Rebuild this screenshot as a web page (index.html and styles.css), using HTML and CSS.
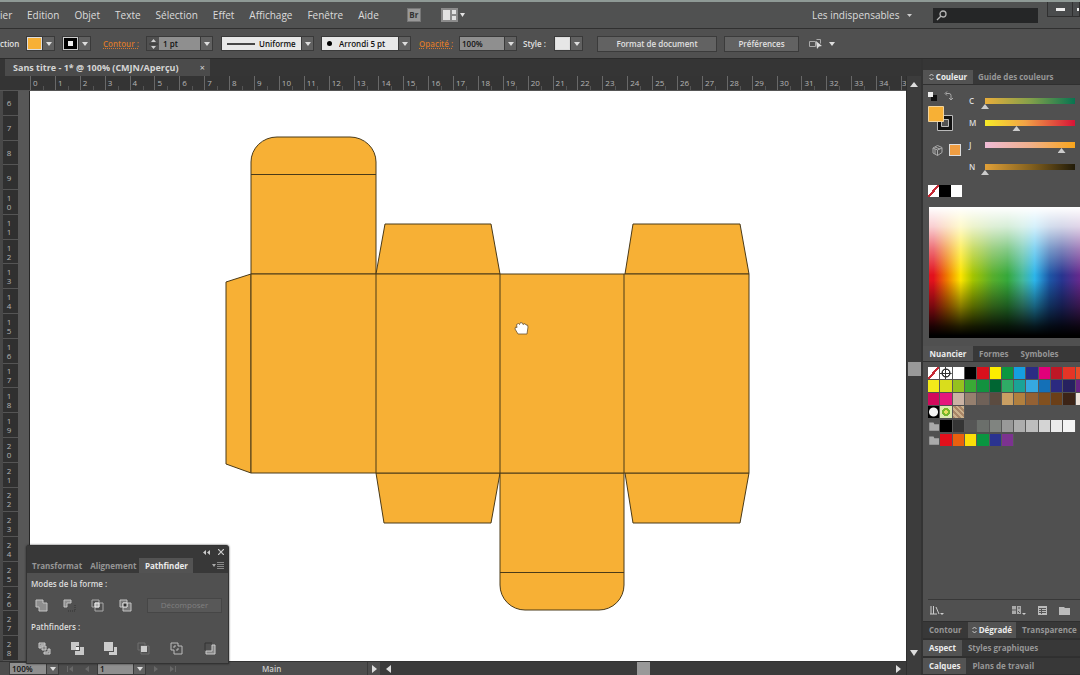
FILE: index.html
```html
<!DOCTYPE html>
<html lang="fr">
<head>
<meta charset="utf-8">
<title>Sans titre - 1</title>
<link rel="stylesheet" href="styles.css">
</head>
<body>
<div class="app">
  <header class="menubar">
    <nav class="menus">
      <a class="menu-cut" href="#">ier</a><a href="#">Edition</a><a href="#">Objet</a><a href="#">Texte</a><a href="#">Sélection</a><a href="#">Effet</a><a href="#">Affichage</a><a href="#">Fenêtre</a><a href="#">Aide</a>
    </nav>
    <button class="bridge" aria-label="Bridge"><span>Br</span></button>
    <button class="arrange" aria-label="Disposition">
      <svg width="24" height="14" viewBox="0 0 24 14"><path fill="#8b8b8b" d="M0 0h17v14H0z"/><path fill="#e2e2e2" d="M2 2h7v10H2zM11 2h4v4h-4zM11 8h4v4h-4zM19 5h5l-2.500 4z"/></svg>
    </button>
    <div class="workspace-pick">
      <select aria-label="Espace de travail"><option>Les indispensables</option></select>
      <svg width="5" height="3" viewBox="0 0 5 3"><path fill="#ccc" d="M0 0h5L2.500 3z"/></svg>
    </div>
    <label class="search">
      <svg width="11" height="11" viewBox="0 0 11 11" fill="none" stroke="#b5b5b5" stroke-width="1.300"><circle cx="7" cy="4" r="3"/><path d="M5 6L1 10"/></svg>
      <input type="text" aria-label="Rechercher">
    </label>
    <div class="window-buttons"><button aria-label="Réduire"><i></i></button><button aria-label="Agrandir"><i></i></button></div>
  </header>

  <div class="control">
    <span class="selection">ction</span>
    <div class="combo fill-combo"><button class="chip fill" aria-label="Fond"></button><button class="arrow" aria-label="Choisir le fond"></button></div>
    <div class="combo stroke-combo"><button class="chip stroke" aria-label="Couleur de contour"><i></i></button><button class="arrow" aria-label="Choisir le contour"></button></div>
    <a class="hot contour" href="#">Contour :</a>
    <div class="combo weight">
      <button class="stepper" aria-label="Epaisseur"><svg width="9" height="14" viewBox="0 0 9 14"><path fill="#d0d0d0" d="M2 5h5L4.500 2zM2 9h5l-2.500 3z"/><path stroke="#353535" d="M0 7h9"/></svg></button>
      <input type="text" value="1 pt" aria-label="Epaisseur du contour"><button class="arrow" aria-label="Liste des épaisseurs"></button>
    </div>
    <div class="combo light profile"><svg width="28" height="4" viewBox="0 0 28 4"><path stroke="#111" stroke-width="1.500" d="M0 2h28"/></svg><select aria-label="Profil"><option>Uniforme</option></select><button class="arrow" aria-label="Liste des profils"></button></div>
    <div class="combo light brush"><svg width="5" height="5" viewBox="0 0 5 5"><circle cx="2.500" cy="2.500" r="2.500"/></svg><select aria-label="Forme"><option>Arrondi 5 pt</option></select><button class="arrow" aria-label="Liste des formes"></button></div>
    <a class="hot opacity" href="#">Opacité :</a>
    <div class="combo percent"><input type="text" value="100%" aria-label="Opacité"><button class="arrow" aria-label="Liste des opacités"></button></div>
    <span class="style-label">Style :</span>
    <div class="combo"><button class="chip style" aria-label="Style graphique"></button><button class="arrow" aria-label="Liste des styles"></button></div>
    <button class="push format">Format de document</button>
    <button class="push prefs">Préférences</button>
    <button class="similar" aria-label="Sélectionner les objets similaires">
      <svg width="26" height="12" viewBox="0 0 26 12"><path fill="none" stroke="#aaa" d="M.5 3.500h6v5h-6zM7.500 1.500h4v4"/><path fill="#ddd" d="M7 3l6 5-3 .5L8 11zM20 4h6l-3 4z"/></svg>
    </button>
  </div>

  <main class="workspace">
    <section class="document">
      <div class="tabs-row"><div class="doc-tab"><span>Sans titre - 1* @ 100% (CMJN/Aperçu)</span><button aria-label="Fermer">×</button></div></div>
      <div class="ruler-h" id="ruler-h"></div>
      <div class="ruler-v" id="ruler-v"></div>
      <div class="artboard">
        <svg viewBox="30 91 876 570" preserveAspectRatio="xMinYMin slice">
          <g fill="#f7b035" stroke="#4a3a18" stroke-width="1">
            <path d="M251 274V162a26 25 0 0 1 26-25H350a26 25 0 0 1 26 25V274z"/>
            <path d="M251 274l-25 8v182l25 9z"/>
            <path d="M376 274l9-50H491l9 50zM625 274l8-50H740l9 50z"/>
            <path d="M376 473l8 50H491l9-50zM625 473l8 50H740l9-50z"/>
            <path d="M500 473V585a25 25 0 0 0 25 25H599a25 25 0 0 0 25-25V473z"/>
            <path d="M251 274H749V473H251zM376 274V473M500 274V473M624 274V473"/>
            <path fill="none" d="M251 174.500H376M500 572.500H624"/>
          </g>
          <path fill="#fff" stroke="#6b5330" stroke-width=".8" d="M518 334l-3-5 .5-2 1.500.5-.5-3 2-1 1 1 1-2 2 .5.500 1.500 2-1 1 1.500 1.500 0 .5 2-1 7z"/>
        </svg>
      </div>
      <div class="scroll-v"><button aria-label="Monter"><svg width="8" height="6" viewBox="0 0 8 6"><path fill="#ddd" d="M0 5h8L4 0z"/></svg></button><i></i><button aria-label="Descendre"><svg width="8" height="6" viewBox="0 0 8 6"><path fill="#ddd" d="M0 0h8L4 6z"/></svg></button></div>
      <footer class="status">
        <div class="combo zoom"><input type="text" value="100%" aria-label="Zoom"><button class="arrow" aria-label="Niveaux de zoom"></button></div>
        <svg class="nav" width="22" height="8" viewBox="0 0 22 8"><path fill="#686868" d="M0 1h1v6H0zM6 1v6L2 4zM22 1v6l-4-3z"/></svg>
        <div class="combo page"><input type="text" value="1" aria-label="Plan de travail"><button class="arrow" aria-label="Plans de travail"></button></div>
        <svg class="nav" width="22" height="8" viewBox="0 0 22 8"><path fill="#686868" d="M0 1v6l4-3zM16 1v6l4-3zM21 1h1v6h-1z"/></svg>
        <span class="tool">Main</span>
        <button class="more" aria-label="Afficher"><svg width="5" height="8" viewBox="0 0 5 8"><path fill="#ddd" d="M0 0v8l5-4z"/></svg></button>
        <div class="scroll-h"><svg width="5" height="8" viewBox="0 0 5 8"><path fill="#ddd" d="M5 0v8L0 4z"/></svg><i></i><svg width="5" height="8" viewBox="0 0 5 8"><path fill="#ddd" d="M0 0v8l5-4z"/></svg></div>
      </footer>

      <aside class="pathfinder">
        <div class="pf-title"><svg width="7" height="5" viewBox="0 0 7 5"><path fill="#ccc" d="M3 0v5L0 2.500zM7 0v5L4 2.500z"/></svg><svg width="6" height="6" viewBox="0 0 6 6"><path stroke="#ccc" stroke-width="1.200" d="M0 0l6 6M6 0L0 6"/></svg></div>
        <div class="tabs pf-tabs"><button>Transformat</button><button>Alignement</button><button class="on">Pathfinder</button><svg width="12" height="7" viewBox="0 0 12 7"><path fill="#aaa" d="M0 2h4L2 5z"/><path stroke="#888" d="M5 .5h7M5 2.500h7M5 4.500h7M5 6.500h7"/></svg></div>
        <div class="pf-body">
          <h3>Modes de la forme :</h3>
          <div class="pf-modes">
            <button aria-label="Réunion"><svg viewBox="0 0 13 13"><path fill="#8e8e8e" stroke="#c4c4c4" d="M1 1h7v3h4v8H4V8H1z"/></svg></button>
            <button aria-label="Soustraction"><svg viewBox="0 0 13 13"><path fill="#8e8e8e" stroke="#c4c4c4" d="M1 8V1h7v3H4v4z"/><path fill="none" stroke="#333" d="M5 12h7V5" stroke-dasharray="1 1"/></svg></button>
            <button aria-label="Intersection"><svg viewBox="0 0 13 13"><path fill="none" stroke="#aaa" d="M1 1h7v7H1zM4 4h8v8H4z"/><path fill="#aaa" stroke="#eee" d="M4 4h4v4H4z"/></svg></button>
            <button aria-label="Exclusion"><svg viewBox="0 0 13 13"><path fill="#777" stroke="#c4c4c4" d="M1 1h7v7H1zM4 4h8v8H4z"/><path fill="#333" stroke="#ddd" d="M4 4h4v4H4z"/></svg></button>
            <button class="expand" disabled>Décomposer</button>
          </div>
          <h3>Pathfinders :</h3>
          <div class="pf-ops">
            <button aria-label="Division"><svg viewBox="0 0 13 13"><path fill="#888" stroke="#ccc" d="M1 1h6v2H3v3H1zM4 4h4v4H4zM10 7h2v5H6v-2h4z"/></svg></button>
            <button aria-label="Fond"><svg viewBox="0 0 13 13"><path fill="#c8c8c8" d="M0 0h8v4H5v4H0zM9 5h4v8H4V9h5z"/><path fill="#eee" d="M5 5h3v3H5z"/></svg></button>
            <button aria-label="Fusion"><svg viewBox="0 0 13 13"><path fill="#ccc" d="M0 0h9v9H0zM10 5h3v8H5v-3h5z"/></svg></button>
            <button aria-label="Découpe"><svg viewBox="0 0 13 13"><path fill="none" stroke="#6f6f6f" d="M1 1h7v7H1zM4 4h8v8H4z"/><path fill="#ccc" d="M4 4h6v6H4z"/></svg></button>
            <button aria-label="Contour"><svg viewBox="0 0 13 13"><path fill="none" stroke="#bbb" d="M1 1h7v3h4v8H4V8H1zM4 6V4h2M8 6v2H6"/></svg></button>
            <button aria-label="Arrière"><svg viewBox="0 0 13 13"><path fill="none" stroke="#333" d="M2 8V1h7"/><path fill="#888" stroke="#ccc" d="M9 3h3v9H3V9h6z"/></svg></button>
          </div>
        </div>
      </aside>
    </section>

    <aside class="dock">
      <div class="tabs color-tabs"><button class="on"><svg width="5" height="8" viewBox="0 0 5 8"><path fill="none" stroke="#ccc" d="M.5 3l2-2 2 2M.5 5l2 2 2-2"/></svg>Couleur</button><button>Guide des couleurs</button></div>
      <div class="color-panel">
        <div class="color-top">
          <div class="color-tools">
            <div class="mini"><svg width="9" height="10" viewBox="0 0 9 10"><path fill="#111" d="M3 4h6v6H3z"/><path fill="#eee" d="M0 1h5v5H0z"/></svg><svg width="10" height="10" viewBox="0 0 10 10"><path fill="none" stroke="#aaa" d="M2 2.500h3a2 2 0 0 1 2 2V8M3 .5l-2 2 2 2M5 7l2 2 2-2"/></svg></div>
            <svg class="fillstroke" width="26" height="26" viewBox="0 0 26 26"><path fill="#111" stroke="#bbb" d="M9.500 9.500h15v15h-15z"/><path fill="#535353" stroke="#bbb" d="M13.500 13.500h7v7h-7z"/><path fill="#f7b035" stroke="#f3d49b" d="M.5 .5h15v15H.5z"/></svg>
            <div class="gamut"><svg width="11" height="11" viewBox="0 0 11 11"><path fill="none" stroke="#aaa" d="M5.500 .5l4.500 2v5l-4.500 3L1 8V3zM1 3l4.500 2L10 3M5.500 5v5.500M3 2l5 2M3 4v5"/></svg><i></i></div>
          </div>
          <div class="sliders">
            <label>C<input class="c" type="range" value="0"></label>
            <label>M<input class="m" type="range" value="35"></label>
            <label>J<input class="j" type="range" value="85"></label>
            <label>N<input class="n" type="range" value="0"></label>
          </div>
        </div>
        <div class="basics"><button class="none" aria-label="Sans"></button><button class="black" aria-label="Noir"></button><button class="white" aria-label="Blanc"></button></div>
        <div class="spectrum"></div>
      </div>
      <div class="tabs swatch-tabs"><button class="on">Nuancier</button><button>Formes</button><button>Symboles</button></div>
      <div class="swatch-panel">
        <div class="swatches" id="swatches"></div>
        <div class="swatch-tools">
          <button aria-label="Bibliothèques"><svg width="14" height="9" viewBox="0 0 14 9"><path fill="none" stroke="#ccc" d="M1 0v8M3.500 0v8M6 1l3 7M0 8h7"/><path fill="#ccc" d="M10 7h4l-2 2z"/></svg></button>
          <button class="kinds" aria-label="Types de nuances"><svg width="14" height="9" viewBox="0 0 14 9"><path fill="#aaa" d="M0 0h9v8H0z"/><path stroke="#555" d="M0 4h4M4.500 0v8M6 2h2M6 5l2 2"/><path fill="#ccc" d="M10 7h4l-2 2z"/></svg></button>
          <button aria-label="Options"><svg width="9" height="9" viewBox="0 0 9 9"><path fill="#bbb" d="M0 0h9v9H0z"/><path stroke="#555" d="M1 2.500h7M1 4.500h7M1 6.500h7M3.500 2v6"/></svg></button>
          <button aria-label="Nouveau groupe"><svg width="11" height="9" viewBox="0 0 11 9"><path fill="#bbb" d="M0 1h5l1 1h5v7H0z"/></svg></button>
        </div>
      </div>
      <div class="tabs bar"><button>Contour</button><button class="on"><svg width="5" height="8" viewBox="0 0 5 8"><path fill="none" stroke="#ccc" d="M.5 3l2-2 2 2M.5 5l2 2 2-2"/></svg>Dégradé</button><button>Transparence</button></div>
      <div class="tabs bar"><button class="on">Aspect</button><button>Styles graphiques</button></div>
      <div class="tabs bar"><button class="on">Calques</button><button>Plans de travail</button></div>
    </aside>
  </main>
</div>
<script src="script.js"></script>
</body>
</html>
```
FILE: styles.css
```css
* { box-sizing: border-box; }
body { margin: 0; background: #3a3a3a; color: #dcdcdc; font: 9px/12px "Open Sans", "Noto Sans", sans-serif; overflow: hidden; }
button, input, select { font: inherit; color: inherit; margin: 0; padding: 0; border: 0; background: none; border-radius: 0; appearance: none; min-width: 0; outline: 0; }
button { display: flex; align-items: center; justify-content: center; white-space: nowrap; }
a { color: inherit; text-decoration: none; }
svg { display: block; flex: none; }
h3 { margin: 0; font: inherit; }
.app { height: 100vh; display: flex; flex-direction: column; }

.menubar { flex: none; height: 29px; display: flex; align-items: center; background: #505151; border-top: 2px solid #8f9a96; border-bottom: 1px solid #303030; font-size: 10px; line-height: 14px; overflow: hidden; }
.menus { display: flex; gap: 15px; }
.menu-cut { width: 12px; }
.bridge { width: 14px; height: 14px; margin-left: 28px; background: #999; border: 1px solid #777; color: #333; font-size: 8px; font-weight: 700; }
.arrange { margin-left: 20px; }
.workspace-pick { margin-left: auto; display: flex; align-items: center; gap: 7px; }
.search { width: 105px; height: 15px; margin-left: 21px; padding-left: 3px; display: flex; align-items: center; background: #252627; }
.search input { flex: 1; }
.window-buttons { align-self: flex-start; display: flex; width: 33px; height: 15px; margin-left: 9px; overflow: hidden; border: 1px solid #303030; border-top: 0; }
.window-buttons button { flex: none; width: 25px; border-right: 1px solid #303030; background: #4a4c4d; }
.window-buttons i { width: 9px; height: 3px; background: #eee; }
.window-buttons button + button { justify-content: flex-start; padding-left: 4px; }

.control { flex: none; height: 30px; display: flex; align-items: center; background: #505050; border-bottom: 1px solid #2b2b2b; color: #e0e0e0; font-size: 8px; font-weight: 600; overflow: hidden; white-space: nowrap; }
.selection { width: 18px; }
.combo { display: flex; align-items: stretch; flex: none; height: 15px; border: 1px solid #3a3a3a; }
.arrow { width: 12px; flex: none; background: #616161; border-left: 1px solid #3a3a3a; }
.arrow::before { content: ""; border: 3px solid transparent; border-top: 4px solid #ddd; border-bottom: 0; }
.fill-combo { margin-left: 8px; }
.stroke-combo { margin-left: 7px; }
.chip { width: 15px; border: 1px solid #ddd; }
.chip.fill { background: #f7b035; }
.chip.stroke { background: #000; border-color: #ccc; }
.chip.stroke i { width: 5px; height: 5px; background: #eee; }
.chip.style { background: #e6e6e6; }
.hot { color: #d9792b; text-decoration: underline dotted; }
.contour { width: 43px; margin-left: 12px; }
.weight { width: 67px; }
.stepper { width: 12px; }
.combo input { flex: 1; background: #8f8f8f; color: #111; padding-left: 4px; }
.light { background: #e8e8e8; color: #111; align-items: stretch; }
.light svg { align-self: center; }
.light select { flex: 1; padding-left: 4px; }
.profile { width: 93px; margin-left: 8px; padding-left: 5px; }
.brush { width: 90px; margin-left: 7px; padding-left: 5px; }
.brush select { padding-left: 7px; }
.opacity { width: 40px; margin-left: 8px; }
.percent { width: 58px; }
.percent input { padding-left: 2px; }
.style-label { width: 31px; margin-left: 6px; }
.push { height: 16px; background: #626262; border: 1px solid #3b3b3b; }
.format { width: 120px; margin-left: 14px; }
.prefs { width: 75px; margin-left: 7px; }
.similar { margin-left: 10px; }

.workspace { flex: 1; min-height: 0; display: grid; grid-template-columns: minmax(0, 1fr) 157px; column-gap: 2px; background: #333; }
.document { position: relative; min-height: 0; display: grid; grid-template-columns: 30px minmax(0, 1fr) 15px; grid-template-rows: 17px 15px minmax(0, 1fr) 14px; }
.tabs-row { grid-column: 1 / -1; background: #353535; padding-left: 5px; display: flex; }
.doc-tab { width: 205px; padding: 1px 5px 0 8px; display: flex; align-items: center; justify-content: space-between; background: #4b4b4b; font-weight: 700; color: #d5d5d5; white-space: nowrap; }
.doc-tab button { font-weight: 400; }
.ruler-h { grid-column: 1 / 3; display: grid; grid-template-columns: repeat(35, minmax(0, 1fr)) 5px; padding-left: 30px; background: #343434; border-bottom: 1px solid #555; font-size: 8px; line-height: 14px; color: #b4b4b4; }
.ruler-h span { padding-left: 2px; border-left: 1px solid #686868; overflow: hidden; background: linear-gradient(#555, #555) 12px 100% / 1px 4px no-repeat; }
.ruler-h span:last-child { padding-left: 0; }
.ruler-v { grid-column: 1; grid-row: 3; display: grid; grid-auto-rows: minmax(0, 1fr); padding-right: 12px; border-left: 3px solid #484848; background: linear-gradient(90deg, #303030 15px, #575757 15px 26px, #262626 26px); color: #b4b4b4; font-size: 8px; line-height: 9px; }
.ruler-v span { display: flex; flex-direction: column; align-items: center; justify-content: center; padding-right: 3px; border-bottom: 1px solid #555; overflow: hidden; }
.ruler-v b { font-weight: 400; }
.artboard { grid-column: 2; grid-row: 3; background: #fff; overflow: hidden; }
.artboard svg { width: 100%; height: 100%; }
.scroll-v { grid-column: 3; grid-row: 2 / 5; display: flex; flex-direction: column; align-items: center; background: #3c3c3c; border-left: 1px solid #2f2f2f; padding: 6px 0 19px; justify-content: space-between; }
.scroll-v i { width: 13px; height: 14px; background: #999; }
.status { grid-column: 1 / 3; grid-row: 4; display: flex; align-items: center; background: #4d4d4d; border-top: 1px solid #333; padding-left: 9px; color: #ccc; font-size: 8px; font-weight: 600; }
.status .combo { height: 13px; }
.zoom { width: 50px; }
.page { width: 49px; }
.status .combo input { padding-left: 2px; }
.nav { margin: 0 8px; }
.tool { width: 105px; margin-left: 78px; flex: none; }
.more { width: 13px; height: 13px; border-left: 1px solid #3a3a3a; }
.scroll-h { flex: 1; align-self: stretch; display: flex; align-items: center; justify-content: space-between; background: #3b3b3b; padding: 0 5px 0 6px; }
.scroll-h i { width: 13px; height: 13px; background: #999; }

.tabs { display: flex; background: #383838; color: #969696; font-size: 8px; font-weight: 700; overflow: hidden; }
.tabs button { flex: none; gap: 2px; }
.tabs .on { background: #535353; color: #ececec; }
.pathfinder { position: absolute; left: 26px; bottom: 11px; width: 203px; background: #505050; border: 1px solid #333; border-radius: 3px 3px 0 0; box-shadow: 0 0 2px #222; }
.pf-title { height: 12px; display: flex; align-items: center; justify-content: flex-end; gap: 8px; padding-right: 4px; background: #383838; }
.pf-tabs { height: 15px; align-items: stretch; padding-right: 4px; }
.pf-tabs button { padding: 0 5px; }
.pf-tabs button + button { padding: 0 3px; }
.pf-tabs .on { width: 54px; }
.pf-tabs svg { margin: 4px 0 0 auto; }
.pf-body { padding: 4px 4px 8px; color: #ddd; }
.pf-body h3 { font-size: 8px; font-weight: 600; line-height: 13px; }
.pf-modes { display: flex; gap: 15px; align-items: center; padding: 5px 2px 5px 4px; height: 30px; }
.pf-ops { display: flex; gap: 20px; padding: 9px 7px 0; }
.pf-body svg { width: 13px; height: 13px; }
.expand { flex: 1; height: 15px; background: #585858; border: 1px solid #464646; color: #808080; font-size: 8px; }

.dock { min-width: 0; overflow: hidden; display: flex; flex-direction: column; background: #505050; border-top: 11px solid #363636; }
.dock .tabs { flex: none; border-bottom: 1px solid #303030; }
.color-tabs { height: 15px; }
.color-tabs button { padding: 0 6px 0 5px; }
.color-tabs .on { width: 50px; padding: 0 3px; }
.color-panel { padding: 6px 0 8px 5px; }
.color-top { display: flex; }
.color-tools { width: 41px; }
.mini { display: flex; gap: 7px; height: 10px; }
.fillstroke { margin-top: 5px; }
.gamut { display: flex; align-items: center; gap: 6px; padding-left: 4px; margin-top: 12px; }
.gamut i { width: 12px; height: 12px; background: #ef9d42; border: 1px solid #ddd; }
.sliders { flex: 1; display: grid; grid-auto-rows: 22px; padding: 3px 1px 0 0; font-size: 8px; font-weight: 600; }
.sliders label { display: flex; align-items: flex-start; line-height: 13px; }
.sliders input { flex: 1; height: 12px; margin: 4px 0 0 auto; max-width: 98px; background-repeat: no-repeat; background-size: calc(100% - 8px) 6px; background-position: 4px 0; }
.sliders input::-webkit-slider-runnable-track { height: 12px; }
.sliders input::-webkit-slider-thumb { appearance: none; width: 8px; height: 5px; margin-top: 6px; background: #ccc; clip-path: polygon(50% 0, 100% 100%, 0 100%); }
.sliders .c { background-image: linear-gradient(90deg, #e9ae3b, #84a04a 50%, #077451); }
.sliders .m { background-image: linear-gradient(90deg, #f7eb28, #f1a246 45%, #d61337); }
.sliders .j { background-image: linear-gradient(90deg, #eebbd6, #f0b08b 50%, #f9a51b); }
.sliders .n { background-image: linear-gradient(90deg, #e0a038, #85621f 50%, #211b09); }
.basics { display: flex; width: 34px; height: 12px; margin-top: 3px; }
.basics button { flex: 1; }
.none { background: linear-gradient(135deg, #fff 45%, #c62a35 45% 56%, #fff 56%); }
.black { background: #000; }
.white { background: #fff; }
.none, .swatch-row .none { background: linear-gradient(to bottom right, #fff 43%, #c62a35 43% 57%, #fff 57%); }
.spectrum { height: 131px; margin: 10px 0 0 1px; background: linear-gradient(#fff 0, #fffc 15%, #fff6 32%, #fff0 52%, #0000 56%, #0007 76%, #000d 91%, #000 98%), linear-gradient(90deg, #e2111d 3%, #ee7a00 12%, #fde500 21%, #a4c400 29%, #58ae2c 42%, #35a83c 52%, #45b89b 62%, #2cb5ea 70%, #1d56a5 80%, #27358f 88%, #67298c); }
.swatch-tabs { height: 16px; }
.swatch-tabs button { padding: 0 6px; }
.swatch-tabs .on { width: 50px; }
.swatch-panel { flex: 1; min-height: 0; display: flex; flex-direction: column; padding: 5px 0 0 5px; }
.swatches { display: flex; flex-direction: column; margin-right: -8px; flex: 1; border-bottom: 1px solid #383838; }
.swatch-row { display: grid; grid-template-columns: repeat(13, minmax(0, 1fr)); height: 12px; margin-bottom: 1px; flex: none; }
.swatch-row.group { margin: 1px 0; }
.swatch-row button { border-right: 1px solid #585858; }
.swatch-row .reg { background: linear-gradient(#333, #333) 50% / 1px 100% no-repeat, linear-gradient(#333, #333) 50% / 100% 1px no-repeat, radial-gradient(circle, #fff 3px, #333 3px 4px, #fff 5px); }
.swatch-row .dot { background: radial-gradient(circle, #f4f4f4 4px, #000 5px); }
.swatch-row .leaf { background: radial-gradient(circle, #e6e05d 2px, #76b82a 2px 4px, #dcebae 4px); }
.swatch-row .flower { background: repeating-linear-gradient(45deg, #a98668 0 2px, #cbb28d 2px 4px); }
.swatch-row .folder { background: #aaa; clip-path: polygon(10% 20%, 45% 20%, 52% 35%, 90% 35%, 90% 90%, 10% 90%); }
.swatch-tools { height: 21px; display: flex; align-items: center; gap: 12px; padding: 0 10px 0 2px; }
.swatch-tools .kinds { margin-left: auto; }
.bar { height: 18px; border-top: 1px solid #2f2f2f; }
.bar button { padding: 0 6px; }
.bar button + .on { padding: 0 4px; }
```
FILE: script.js
```js
const horizontal = document.getElementById("ruler-h");
for (let n = 0; n <= 35; n++) {
  const mark = document.createElement("span");
  mark.textContent = n < 35 ? n : "3";
  horizontal.append(mark);
}

const vertical = document.getElementById("ruler-v");
for (let n = 6; n <= 28; n++) {
  const mark = document.createElement("span");
  for (const digit of String(n)) {
    const line = document.createElement("b");
    line.textContent = digit;
    mark.append(line);
  }
  vertical.append(mark);
}

const rows = [
  ["none", "reg", "#fff", "#000", "#d9101c", "#fdec00", "#0b9640", "#159ee0", "#2b2c83", "#e2007a", "#be1725", "#e53526", "#e84c27"],
  ["#f3e91a", "#d9dd1c", "#95c11f", "#3aa935", "#12923f", "#006633", "#2fac66", "#1aa397", "#36a9e1", "#1470b7", "#2b2a80", "#272160", "#662382"],
  ["#d20a5c", "#e5177d", "#cbb3a4", "#96806f", "#6f6158", "#5b4b40", "#c99f63", "#b1803f", "#946134", "#81501f", "#6b3f18", "#3c2417", "#eee3da"],
  ["dot", "leaf", "flower"],
  ["folder", "#000", "#353535", "#565656", "#6b6f6b", "#808480", "#999", "#adadad", "#bdbdbd", "#d4d4d4", "#ebebeb", "#f3f3f3"],
  ["folder", "#e20f1b", "#e9600e", "#fbde08", "#0a9540", "#2a3390", "#7c3290"]
];
const panel = document.getElementById("swatches");
for (const colors of rows) {
  const row = document.createElement("div");
  row.className = colors[0] === "folder" ? "swatch-row group" : "swatch-row";
  for (const color of colors) {
    const swatch = document.createElement("button");
    swatch.setAttribute("aria-label", color);
    if (color[0] === "#") swatch.style.background = color;
    else swatch.className = color;
    row.append(swatch);
  }
  panel.append(row);
}
```
